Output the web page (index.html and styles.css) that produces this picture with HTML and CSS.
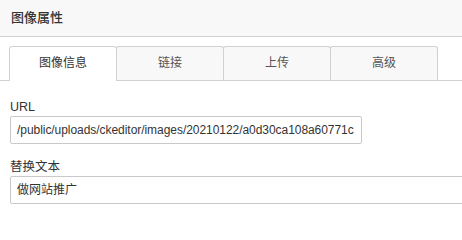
FILE: index.html
```html
<!DOCTYPE html>
<html lang="zh-CN">
<head>
<meta charset="utf-8">
<title>图像属性</title>
<link rel="stylesheet" href="styles.css">
</head>
<body>
<div class="dialog">
  <div class="header">图像属性</div>
  <div class="tabs">
    <div class="tab active">图像信息</div>
    <div class="tab">链接</div>
    <div class="tab">上传</div>
    <div class="tab">高级</div>
  </div>
  <div class="form">
    <div class="field">
      <label class="label">URL</label>
      <div class="input url">/public/uploads/ckeditor/images/20210122/a0d30ca108a60771c</div>
    </div>
    <div class="field">
      <label class="label">替换文本</label>
      <div class="input alt">做网站推广</div>
    </div>
  </div>
</div>
</body>
</html>
```
FILE: styles.css
```css
html, body {
  margin: 0;
  padding: 0;
  background: #fff;
}
body {
  width: 462px;
  height: 219px;
  overflow: hidden;
  font-family: "Liberation Sans", "Noto Sans CJK SC", sans-serif;
  color: #333;
}
.header {
  height: 36px;
  line-height: 36px;
  padding-left: 11px;
  background: #f8f8f8;
  border-bottom: 1px solid #d1d1d1;
  font-size: 13px;
  font-weight: 500;
  color: #333;
}
.tabs {
  display: flex;
  margin-top: 9px;
  padding-left: 9px;
  height: 34px;
  border-bottom: 1px solid #d1d1d1;
}
.tab {
  box-sizing: border-box;
  width: 108px;
  height: 34px;
  line-height: 33px;
  text-align: center;
  font-size: 12px;
  color: #555;
  background: #f8f8f8;
  border: 1px solid #d1d1d1;
  border-bottom: none;
  border-radius: 3px 3px 0 0;
  margin-left: -1px;
}
.tab:first-child {
  margin-left: 0;
}
.tab.active {
  background: #fff;
  color: #333;
  height: 35px;
  position: relative;
  z-index: 1;
}
.form {
  padding: 18px 10px 0 10px;
}
.field + .field {
  margin-top: 15px;
}
.label {
  display: block;
  font-size: 12.5px;
  line-height: 16px;
  margin-bottom: 1px;
  color: #333;
}
.input {
  box-sizing: border-box;
  height: 28px;
  line-height: 26px;
  padding: 0 0 0 6px;
  border: 1px solid #c9c9c9;
  border-radius: 2px;
  font-size: 12px;
  color: #333;
  white-space: nowrap;
  overflow: hidden;
  background: #fff;
}
.input.url {
  width: 352px;
  letter-spacing: -0.05px;
}
.input.alt {
  width: 470px;
}
```
